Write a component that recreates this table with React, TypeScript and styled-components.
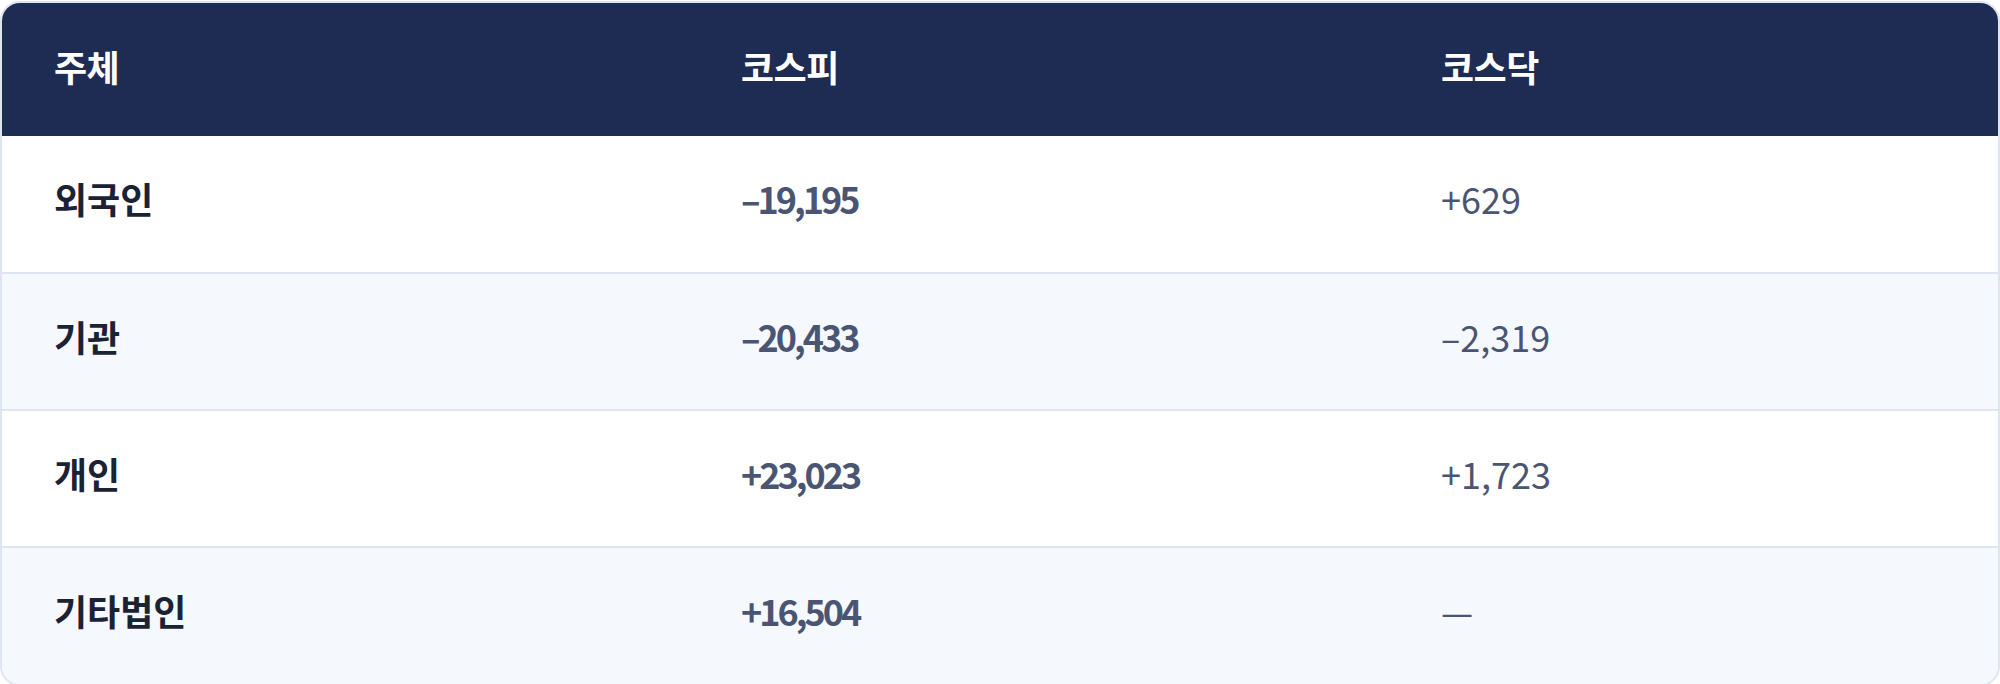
import React from 'react';
import styled, { createGlobalStyle } from 'styled-components';

const GlobalStyle = createGlobalStyle`
  html, body {
    margin: 0;
    padding: 0;
    background: #ffffff;
  }
  body {
    font-family: "Noto Sans CJK KR", "Noto Sans", sans-serif;
  }
`;

const Page = styled.div`
  padding: 1px 0 0;
`;

const Card = styled.div`
  border: 2px solid #dfe5f0;
  border-radius: 20px;
  overflow: hidden;
  background: #ffffff;
`;

const Table = styled.table`
  width: 100%;
  border-collapse: collapse;
  table-layout: fixed;
`;

const HeadRow = styled.tr`
  background: #1e2b53;
  height: 133px;
`;

const HeadCell = styled.th`
  text-align: left;
  padding: 0 0 7px 52px;
  color: #ffffff;
  font-size: 36px;
  font-weight: 700;
  letter-spacing: -0.5px;
`;

const BodyRow = styled.tr<{ $alt: boolean }>`
  background: ${(p) => (p.$alt ? '#f5f8fd' : '#ffffff')};
  height: 137px;
  &:not(:first-child) > td {
    border-top: 2px solid #dfe5f0;
  }
`;

const LabelCell = styled.td`
  padding: 0 0 12px 52px;
  color: #1b2234;
  font-size: 36px;
  font-weight: 700;
`;

const ValueCell = styled.td<{ $strong?: boolean }>`
  padding: 0 0 12px 52px;
  color: #4a5573;
  font-size: 36px;
  font-weight: ${(p) => (p.$strong ? 700 : 400)};
  letter-spacing: ${(p) => (p.$strong ? '-3px' : '0')};
`;

const rows = [
  { name: '외국인', kospi: '–19,195', kosdaq: '+629' },
  { name: '기관', kospi: '–20,433', kosdaq: '–2,319' },
  { name: '개인', kospi: '+23,023', kosdaq: '+1,723' },
  { name: '기타법인', kospi: '+16,504', kosdaq: '—' },
];

export default function App() {
  return (
    <>
      <GlobalStyle />
      <Page>
        <Card>
          <Table>
            <colgroup>
              <col style={{ width: 687 }} />
              <col style={{ width: 700 }} />
              <col />
            </colgroup>
            <thead>
              <HeadRow>
                <HeadCell>주체</HeadCell>
                <HeadCell>코스피</HeadCell>
                <HeadCell>코스닥</HeadCell>
              </HeadRow>
            </thead>
            <tbody>
              {rows.map((r, i) => (
                <BodyRow key={r.name} $alt={i % 2 === 1}>
                  <LabelCell>{r.name}</LabelCell>
                  <ValueCell $strong>{r.kospi}</ValueCell>
                  <ValueCell>{r.kosdaq}</ValueCell>
                </BodyRow>
              ))}
            </tbody>
          </Table>
        </Card>
      </Page>
    </>
  );
}
